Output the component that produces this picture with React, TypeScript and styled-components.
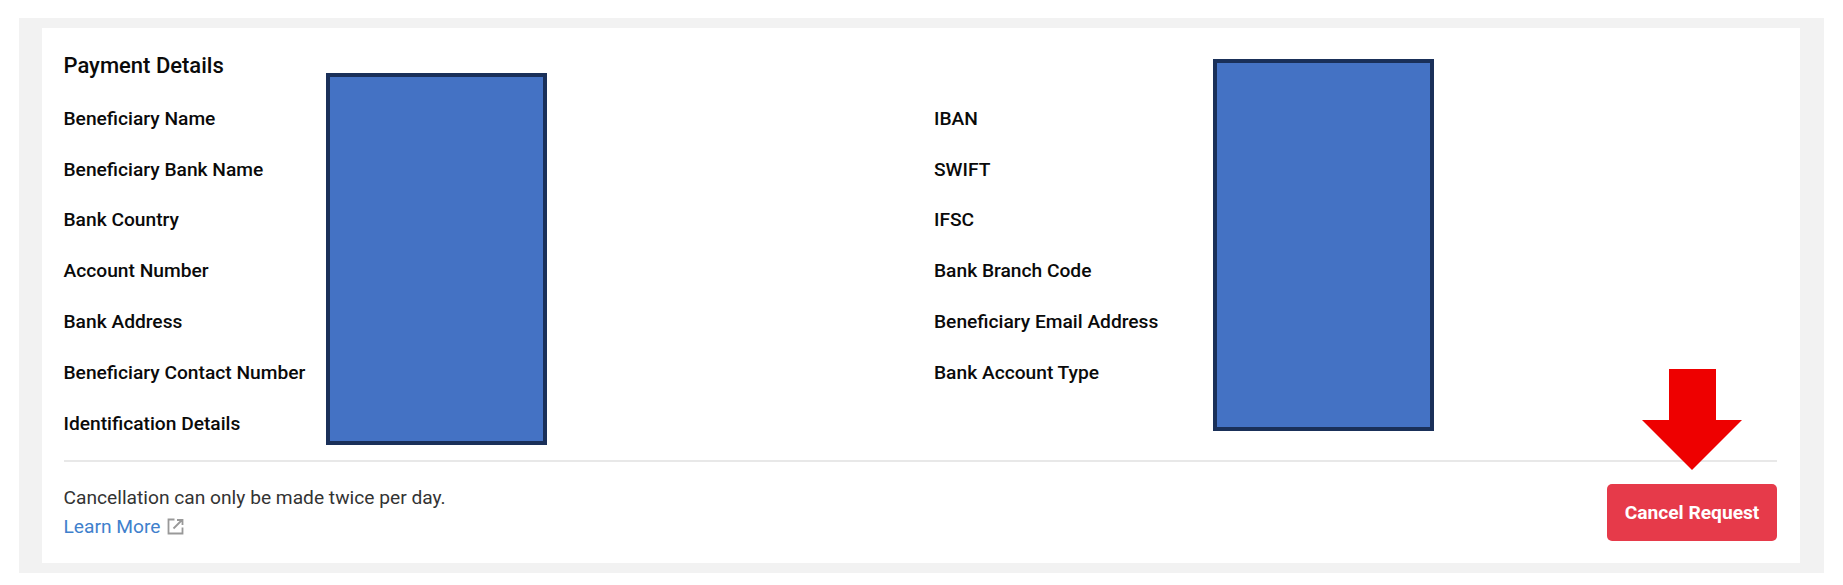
import styled, { createGlobalStyle } from 'styled-components';

const GlobalStyle = createGlobalStyle`
  html, body {
    margin: 0;
    padding: 0;
    background: #ffffff;
    font-family: Roboto, "Liberation Sans", sans-serif;
  }
`;

const Page = styled.div`
  width: 1843px;
  height: 585px;
  padding: 18px 19px 11px;
  box-sizing: border-box;
`;

const Frame = styled.div`
  height: 555px;
  padding: 10px 24px 10px 23px;
  box-sizing: border-box;
  background: #f2f2f2;
`;

const Panel = styled.section`
  position: relative;
  height: 100%;
  padding: 24px 23px 0 21.5px;
  box-sizing: border-box;
  background: #ffffff;
`;

const Title = styled.h2`
  margin: 0 0 13px;
  font-size: 22px;
  line-height: 28px;
  font-weight: 500;
  color: #0a0a0a;
`;

const Columns = styled.div`
  display: grid;
  grid-template-columns: 870.5px 1fr;
  padding-bottom: 11px;
  border-bottom: 2px solid #e8e8e8;
`;

const Row = styled.div`
  height: 50.8px;
  display: flex;
  align-items: center;
  font-size: 19.2px;
  font-weight: 500;
  color: #0a0a0a;
`;

const Footer = styled.div`
  display: flex;
  justify-content: space-between;
  align-items: flex-start;
  padding-top: 21px;
`;

const Note = styled.p`
  margin: 0;
  font-size: 19.2px;
  line-height: 29px;
  color: #333333;
`;

const LearnMore = styled.a`
  display: flex;
  align-items: center;
  gap: 6px;
  font-size: 19.2px;
  line-height: 30px;
  color: #4080cc;
  text-decoration: none;
`;

const CancelButton = styled.button`
  width: 170px;
  height: 57px;
  margin-top: 1px;
  border: none;
  border-radius: 5px;
  background: #e63a4a;
  color: #ffffff;
  font-family: inherit;
  font-size: 19.2px;
  font-weight: 700;
`;

const Redaction = styled.div<{ $left: number; $top: number; $width: number; $height: number }>`
  position: absolute;
  left: ${({ $left }) => $left}px;
  top: ${({ $top }) => $top}px;
  width: ${({ $width }) => $width}px;
  height: ${({ $height }) => $height}px;
  box-sizing: border-box;
  background: #4472c4;
  border: 4px solid #1a3059;
`;

const Arrow = styled.svg`
  position: absolute;
  left: 1600px;
  top: 341px;
`;

const leftRows = [
  'Beneficiary Name',
  'Beneficiary Bank Name',
  'Bank Country',
  'Account Number',
  'Bank Address',
  'Beneficiary Contact Number',
  'Identification Details',
];

const rightRows = [
  'IBAN',
  'SWIFT',
  'IFSC',
  'Bank Branch Code',
  'Beneficiary Email Address',
  'Bank Account Type',
];

const App = () => (
  <Page>
    <GlobalStyle />
    <Frame>
      <Panel>
        <Title>Payment Details</Title>
        <Columns>
          <div>
            {leftRows.map((label) => (
              <Row key={label}>{label}</Row>
            ))}
          </div>
          <div>
            {rightRows.map((label) => (
              <Row key={label}>{label}</Row>
            ))}
          </div>
        </Columns>
        <Footer>
          <div>
            <Note>Cancellation can only be made twice per day.</Note>
            <LearnMore href="#">
              Learn More
              <svg width="17" height="17" viewBox="0 0 17 17" fill="none" stroke="#999999" strokeWidth="1.8">
                <path d="M15.5 9.5v6H1.5V1.5h6" />
                <path d="M6.5 10.5l8-8M10 2h5.5v5" />
              </svg>
            </LearnMore>
          </div>
          <CancelButton>Cancel Request</CancelButton>
        </Footer>
        <Redaction $left={284} $top={45} $width={221} $height={372} />
        <Redaction $left={1171} $top={31} $width={221} $height={372} />
        <Arrow width="100" height="101" viewBox="0 0 100 101">
          <path d="M27 0h47v51h26L50 101 0 51h27z" fill="#ee0000" />
        </Arrow>
      </Panel>
    </Frame>
  </Page>
);

export default App;
